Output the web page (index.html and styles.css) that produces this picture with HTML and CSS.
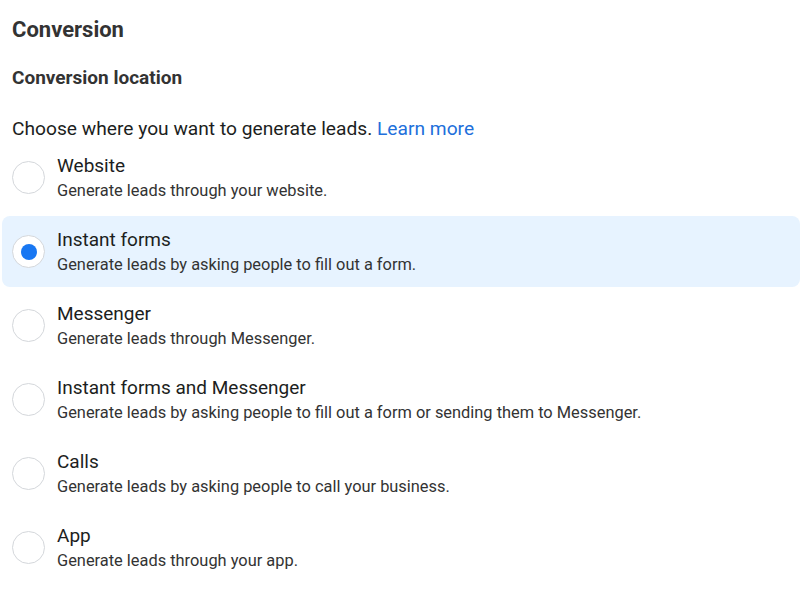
FILE: index.html
```html
<!DOCTYPE html>
<html lang="en">
<head>
    <meta charset="UTF-8">
    <meta name="viewport" content="width=device-width, initial-scale=1.0">
    <title>Conversion</title>
    <link rel="stylesheet" href="styles.css">
</head>
<body>
<div class="section">
    <h1>Conversion</h1>
    <h2>Conversion location</h2>
    <p class="intro">Choose where you want to generate leads. <a href="#">Learn more</a></p>

    <div class="options">
        <div class="option">
            <span class="radio"></span>
            <div class="option-text">
                <div class="option-title">Website</div>
                <div class="option-desc">Generate leads through your website.</div>
            </div>
        </div>
        <div class="option selected">
            <span class="radio"></span>
            <div class="option-text">
                <div class="option-title">Instant forms</div>
                <div class="option-desc">Generate leads by asking people to fill out a form.</div>
            </div>
        </div>
        <div class="option">
            <span class="radio"></span>
            <div class="option-text">
                <div class="option-title">Messenger</div>
                <div class="option-desc">Generate leads through Messenger.</div>
            </div>
        </div>
        <div class="option">
            <span class="radio"></span>
            <div class="option-text">
                <div class="option-title">Instant forms and Messenger</div>
                <div class="option-desc">Generate leads by asking people to fill out a form or sending them to Messenger.</div>
            </div>
        </div>
        <div class="option">
            <span class="radio"></span>
            <div class="option-text">
                <div class="option-title">Calls</div>
                <div class="option-desc">Generate leads by asking people to call your business.</div>
            </div>
        </div>
        <div class="option">
            <span class="radio"></span>
            <div class="option-text">
                <div class="option-title">App</div>
                <div class="option-desc">Generate leads through your app.</div>
            </div>
        </div>
    </div>
</div>
</body>
</html>
```

FILE: styles.css
```css
body {
    margin: 0;
    font-family: Roboto, 'Liberation Sans', sans-serif;
    background: #ffffff;
    color: #1c1e21;
}

.section {
    padding: 16px 0 0 12px;
}

h1 {
    margin: 0;
    font-size: 22px;
    line-height: 28px;
    font-weight: 700;
    color: #333;
}

h2 {
    margin: 22px 0 0;
    font-size: 19px;
    line-height: 24px;
    font-weight: 700;
    color: #333;
}

.intro {
    margin: 27px 0 0;
    font-size: 19.2px;
    line-height: 24px;
    color: #1c1e21;
}

.intro a {
    color: #216fdb;
    text-decoration: none;
}

.options {
    margin: 1px 0 0 -10px;
    display: flex;
    flex-direction: column;
    gap: 3px;
}

.option {
    display: flex;
    align-items: center;
    gap: 12px;
    height: 71px;
    padding: 0 10px;
    border-radius: 8px;
}

.option.selected {
    background-color: #e7f3ff;
}

.radio {
    flex: none;
    width: 31px;
    height: 31px;
    border: 1px solid #d4d7db;
    border-radius: 50%;
    background: #fff;
    display: flex;
    align-items: center;
    justify-content: center;
}

.selected .radio::after {
    content: '';
    width: 16px;
    height: 16px;
    border-radius: 50%;
    background: #1877f2;
}

.option-title {
    font-size: 19px;
    line-height: 24px;
    color: #1c1e21;
}

.option-desc {
    margin-top: 3px;
    font-size: 16.4px;
    line-height: 20px;
    color: #333;
}
```
